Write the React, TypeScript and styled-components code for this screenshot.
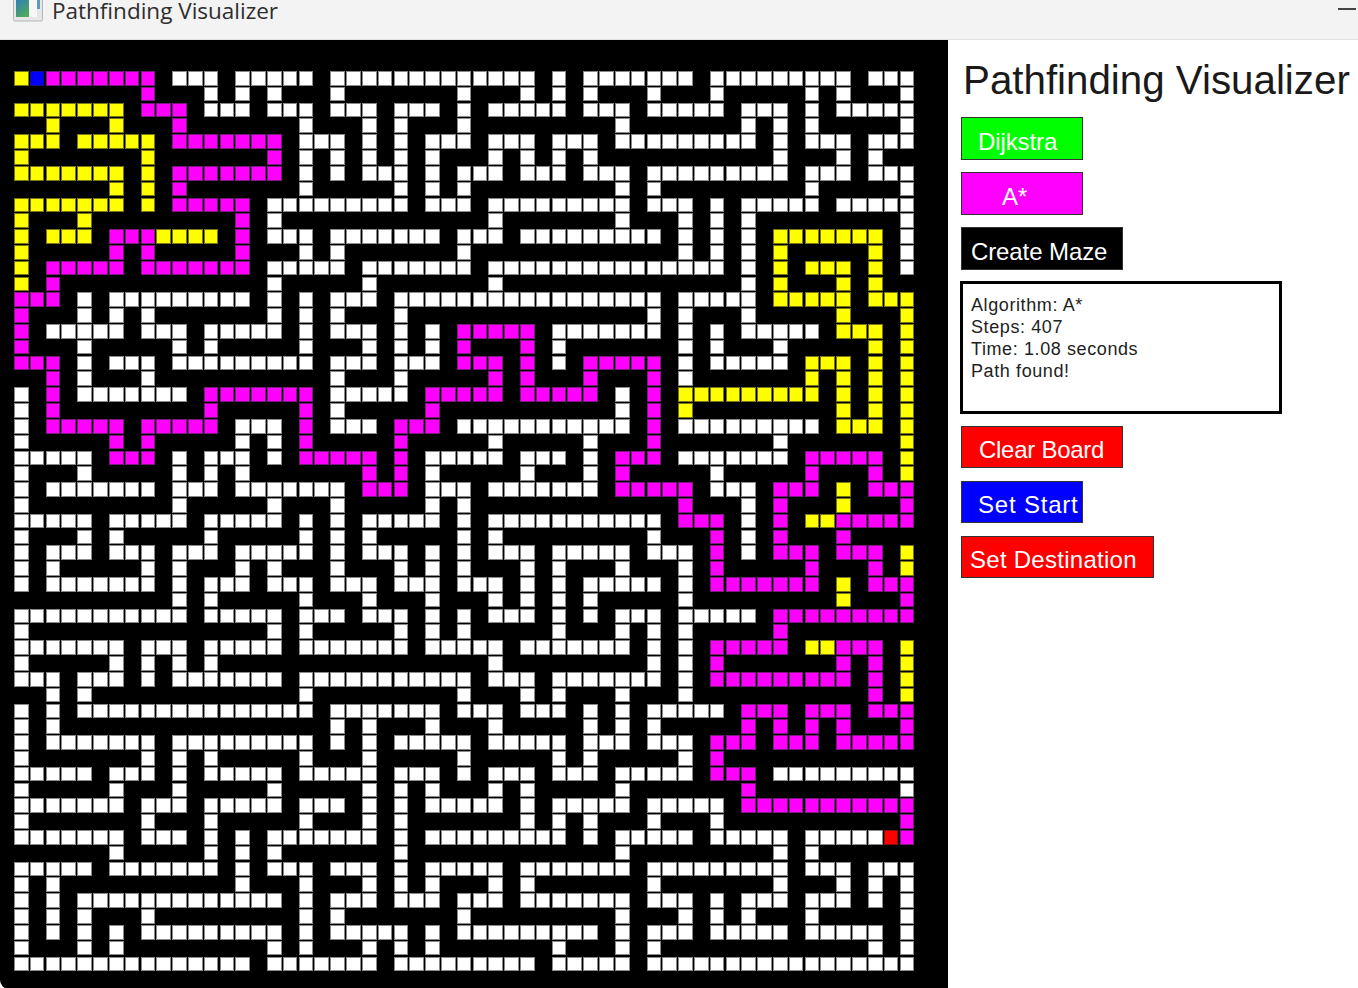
import styled, { createGlobalStyle } from "styled-components";

const GlobalStyle = createGlobalStyle`
  html, body {
    margin: 0;
    padding: 0;
    height: 100%;
    overflow: hidden;
    background: #fff;
  }
`;

// one entry per row: kind + column or column range
// w = open, y = visited, m = path, b = start, r = destination
const MAZE = [
  "y0 b1 m2-8 w10-12 w14-18 w20-32 w34 w36-42 w44-52 w54-56",
  "m8 w12 w14 w16 w20 w28 w32 w34 w36 w40 w44 w50 w52 w56",
  "y0-6 m8-10 w12-14 w16-18 w20-22 w24-26 w28 w30-34 w36-38 w40-44 w46-48 w50 w52-56",
  "y2 y6 m10 w18 w22 w24 w28 w38 w46 w48 w50 w56",
  "y0-2 y4-8 m10-16 w18-20 w22 w24 w26-28 w30-32 w34-36 w38-46 w48 w50-52 w54-56",
  "y0 y8 m16 w18 w20 w22 w24 w26 w30 w32 w34 w36 w48 w52 w54",
  "y0-6 y8 m10-16 w18 w20 w22-24 w26 w28-30 w32-34 w36-38 w40-48 w50-52 w54-56",
  "y6 y8 m10 w18 w24 w26 w28 w38 w40 w50 w56",
  "y0-6 y8 m10-14 w16-24 w26-28 w30-38 w40-42 w44 w46-50 w52-56",
  "y0 y4 m14 w16 w30 w38 w42 w44 w46 w56",
  "y0 y2-4 m6-8 y9-12 m14 w16-18 w20-26 w28-30 w32-40 w42 w44 w46 y48-54 w56",
  "y0 m6 m8 m14 w18 w20 w28 w42 w44 w46 y48 y54 w56",
  "y0 m2-6 m8-14 w16-20 w22-28 w30-44 w46 y48 y50-52 y54 w56",
  "y0 m2 w16 w22 w30 w46 y48 y52 y54",
  "m0-2 w4 w6-14 w16 w18 w20-22 w24-40 w42-46 y48-52 y54-56",
  "m0 w4 w6 w8 w16 w18 w20 w24 w40 w42 w46 y52 y56",
  "m0 w2-6 w8-10 w12-16 w18 w20-22 w24 w26 m28-32 w34-40 w42 w44 w46-50 y52-54 y56",
  "m0 w4 w10 w12 w18 w22 w24 w26 m28 m32 w34 w42 w44 w48 y54 y56",
  "m0-2 w4 w6-8 w10-18 w20-22 w24-26 m28-30 m32 w34 m36-40 w42 w44-48 y50-52 y54 y56",
  "m2 w4 w8 w20 w24 m30 m32 m36 m40 w42 y50 y52 y54 y56",
  "w0 m2 w4-10 m12-18 w20-24 m26-30 m32-36 w38 m40 y42-50 y52 y54 y56",
  "w0 m2 m12 m18 w20 m26 w38 m40 y42 y52 y54 y56",
  "w0 m2-6 m8-12 w14-16 m18 w20-22 m24-26 w28-38 m40 w42-50 y52-54 y56",
  "w0 m6 m8 w14 w16 m18 m24 w30 w36 m40 w48 y56",
  "w0-4 m6-8 w10 w12-14 w16 m18-22 m24 w26-30 w32-34 w36 m38-40 w42-48 m50-54 y56",
  "w0 w4 w10 w12 w14 m22 m24 w26 w32 w36 m38 w44 m50 m54 y56",
  "w0 w2-8 w10-12 w14-20 m22-24 w26-28 w30-36 m38-42 w44-46 m48-50 y52 m54-56",
  "w0 w10 w16 w20 w26 w28 m42 w46 m48 y52 m56",
  "w0-4 w6-10 w12-16 w18 w20 w22-26 w28 w30-40 m42-44 w46 m48 y50-51 m52-56",
  "w0 w4 w6 w12 w18 w20 w22 w28 w30 w40 m44 w46 m48 m52",
  "w0 w2-4 w6-8 w10-12 w14-18 w20 w22-24 w26 w28 w30-32 w34-38 w40-42 m44 w46 m48-50 m52-54 y56",
  "w0 w2 w8 w10 w14 w16 w20 w24 w26 w28 w32 w34 w38 w42 m44 m50 m54 y56",
  "w0 w2-8 w10 w12-14 w16-18 w20-22 w24-26 w28-30 w32 w34 w36-40 w42 m44-50 y52 m54-56",
  "w10 w12 w18 w22 w26 w30 w32 w34 w36 w42 y52 m56",
  "w0-10 w12-16 w18-20 w22-24 w26 w28 w30-32 w34 w36 w38-40 w42-46 m48-56",
  "w0 w16 w18 w24 w26 w28 w34 w38 w40 w42 m48",
  "w0-6 w8-10 w12-16 w18-24 w26-30 w32-38 w40 w42 m44-48 y50-51 m52-54 y56",
  "w0 w6 w8 w10 w12 w30 w40 w42 m44 m52 m54 y56",
  "w0-2 w4-6 w8 w10-16 w18-28 w30-32 w34-40 w42 m44-52 m54 y56",
  "w2 w4 w18 w28 w32 w34 w38 w42 m54 y56",
  "w0 w2 w4-18 w20-26 w28-30 w32-34 w36 w38 w40-44 m46-48 m50-52 m54-56",
  "w0 w2 w20 w22 w26 w30 w36 w38 w40 m46 m48 m50 m52 m56",
  "w0 w2-8 w10-18 w20 w22 w24-28 w30-34 w36-38 w40-42 m44-46 m48-50 m52-56",
  "w0 w8 w10 w12 w18 w22 w28 w34 w36 w42 m44",
  "w0-4 w6-8 w10 w12-16 w18-22 w24-26 w28 w30-32 w34-36 w38-42 m44-46 w48-56",
  "w0 w6 w10 w16 w22 w24 w26 w30 w32 w38 m46 w56",
  "w0-6 w8-10 w12-16 w18-20 w22 w24 w26-30 w32 w34-38 w40-44 m46-56",
  "w0 w8 w12 w18 w22 w24 w32 w34 w36 w40 w44 m56",
  "w0-6 w8-10 w12 w14 w16-22 w24 w26-34 w36 w38-42 w44-48 w50-54 r55 m56",
  "w6 w12 w14 w16 w24 w38 w48 w50",
  "w0-4 w6-12 w14 w16-18 w20-22 w24 w26-30 w32-38 w40-48 w50-52 w54-56",
  "w0 w2 w14 w18 w22 w24 w26 w30 w32 w40 w48 w52 w54 w56",
  "w0 w2 w4-16 w18 w20-22 w24-26 w28-30 w32-38 w40-42 w44 w46-48 w50-52 w54 w56",
  "w0 w2 w4 w8 w18 w20 w28 w38 w42 w44 w46 w50 w56",
  "w0 w2 w4 w6 w8-16 w18 w20-24 w26 w28-36 w38 w40-42 w44-48 w50-54 w56",
  "w0 w4 w6 w16 w18 w22 w24 w26 w34 w38 w40 w54 w56",
  "w0-14 w16-22 w24-32 w34-38 w40-56",
];

const SIZE = 57;

function parseRow(spec: string) {
  const row = new Array(SIZE).fill("");
  spec.split(" ").forEach((run) => {
    const [from, to] = run.slice(1).split("-").map(Number);
    for (let c = from; c <= (to ?? from); c++) row[c] = run[0];
  });
  return row as string[];
}

const COLORS: Record<string, string> = {
  w: "#ffffff",
  y: "#ffff00",
  m: "#ff00ff",
  b: "#0000ff",
  r: "#ff0000",
};

const EDGES: Record<string, string> = {
  w: "#8a8a8a",
  y: "#77771a",
  m: "#7a1a7a",
  b: "#111180",
  r: "#801111",
};

const Window = styled.div`
  width: 1358px;
  height: 988px;
  display: flex;
  flex-direction: column;
  overflow: hidden;
  font-family: "Liberation Sans", Arial, sans-serif;
`;

const TitleBar = styled.div`
  height: 39px;
  flex-shrink: 0;
  display: flex;
  align-items: flex-start;
  justify-content: space-between;
  background: #f3f3f3;
  border-bottom: 1px solid #e2e2e2;
  overflow: hidden;
`;

const TitleLeft = styled.div`
  display: flex;
  align-items: flex-start;
  gap: 9px;
  padding-left: 13px;
`;

const AppIcon = styled.svg`
  display: block;
  width: 30px;
  height: 22px;
  flex-shrink: 0;
`;

const TitleText = styled.span`
  font-family: "Open Sans", sans-serif;
  font-size: 22.5px;
  line-height: 22px;
  color: #2e2e2e;
  white-space: nowrap;
`;

const Minimize = styled.span`
  display: block;
  width: 18px;
  height: 2px;
  margin: 8px 2px 0 0;
  background: #444;
`;

const Main = styled.div`
  flex: 1;
  display: flex;
  min-height: 0;
`;

const Board = styled.div`
  width: 948px;
  height: 949px;
  flex-shrink: 0;
  box-sizing: border-box;
  padding: 31px 0 0 14px;
  background: #000;
  border-bottom-left-radius: 9px;
`;

const Grid = styled.div`
  display: grid;
  grid-template-columns: repeat(57, 14.625px);
  grid-auto-rows: 14.625px;
  gap: 1.1875px;
`;

const Cell = styled.div<{ $kind: string }>`
  background: ${(p) => COLORS[p.$kind] ?? "transparent"};
  box-shadow: ${(p) => (p.$kind ? `inset 0 0 0 1px ${EDGES[p.$kind]}` : "none")};
`;

const Side = styled.div`
  flex: 1;
  display: flex;
  flex-direction: column;
  align-items: flex-start;
  padding: 18px 0 0 13px;
  background: #fff;
`;

const Heading = styled.h1`
  margin: 0 0 13px 2px;
  font-size: 40.3px;
  font-weight: 400;
  line-height: 46px;
  color: #1a1a1a;
  white-space: nowrap;
`;

const ActionButton = styled.button<{ $bg: string; $width: number; $inset: number; $track: number }>`
  display: block;
  box-sizing: border-box;
  width: ${(p) => p.$width}px;
  height: 42.5px;
  margin: 0 0 12.5px;
  padding: 7px 0 0 ${(p) => p.$inset}px;
  background: ${(p) => p.$bg};
  border: 1px solid #333;
  color: #fff;
  font-family: inherit;
  font-size: 24px;
  letter-spacing: ${(p) => p.$track}px;
  line-height: 30px;
  text-align: left;
  white-space: nowrap;
`;

const InfoBox = styled.div`
  box-sizing: border-box;
  width: 322px;
  height: 133px;
  margin: -1px 0 11.5px -1px;
  padding: 10px 0 0 8px;
  border: 3px solid #000;
  color: #222;
  font-size: 18px;
  letter-spacing: 0.6px;
  line-height: 22px;
`;

const InfoLine = styled.div`
  white-space: nowrap;
`;

const buttonsTop = [
  { label: "Dijkstra", bg: "#00ff00", width: 122, inset: 16, track: -0.1 },
  { label: "A*", bg: "#ff00ff", width: 122, inset: 40, track: 0 },
  { label: "Create Maze", bg: "#000000", width: 162, inset: 9, track: -0.1 },
];

const buttonsBottom = [
  { label: "Clear Board", bg: "#ff0000", width: 162, inset: 17, track: -0.27 },
  { label: "Set Start", bg: "#0000ff", width: 122, inset: 16, track: 0.8 },
  { label: "Set Destination", bg: "#ff0000", width: 193, inset: 8, track: 0.27 },
];

const info = ["Algorithm: A*", "Steps: 407", "Time: 1.08 seconds", "Path found!"];

export default function App() {
  const rows = MAZE.map(parseRow);

  return (
    <Window>
      <GlobalStyle />
      <TitleBar>
        <TitleLeft>
          <AppIcon viewBox="0 0 30 22">
            <defs>
              <linearGradient id="pic" x1="0" y1="0" x2="0.6" y2="1">
                <stop offset="0" stopColor="#2f7fb8" />
                <stop offset="1" stopColor="#4fa85c" />
              </linearGradient>
            </defs>
            <rect x="0.5" y="-4" width="29" height="25" rx="1.5" fill="#e6e6e6" stroke="#b5b5b5" />
            <rect x="3" y="0" width="13" height="17" fill="url(#pic)" />
            <rect x="16" y="0" width="8" height="17" fill="#f7f7f7" />
            <rect x="24" y="0" width="3" height="9" fill="#5f9ac0" />
          </AppIcon>
          <TitleText>Pathfinding Visualizer</TitleText>
        </TitleLeft>
        <Minimize />
      </TitleBar>
      <Main>
        <Board>
          <Grid>
            {rows.map((row, r) =>
              row.map((kind, c) => <Cell key={`${r}-${c}`} $kind={kind} />)
            )}
          </Grid>
        </Board>
        <Side>
          <Heading>Pathfinding Visualizer</Heading>
          {buttonsTop.map((b) => (
            <ActionButton key={b.label} $bg={b.bg} $width={b.width} $inset={b.inset} $track={b.track}>
              {b.label}
            </ActionButton>
          ))}
          <InfoBox>
            {info.map((line) => (
              <InfoLine key={line}>{line}</InfoLine>
            ))}
          </InfoBox>
          {buttonsBottom.map((b) => (
            <ActionButton key={b.label} $bg={b.bg} $width={b.width} $inset={b.inset} $track={b.track}>
              {b.label}
            </ActionButton>
          ))}
        </Side>
      </Main>
    </Window>
  );
}
